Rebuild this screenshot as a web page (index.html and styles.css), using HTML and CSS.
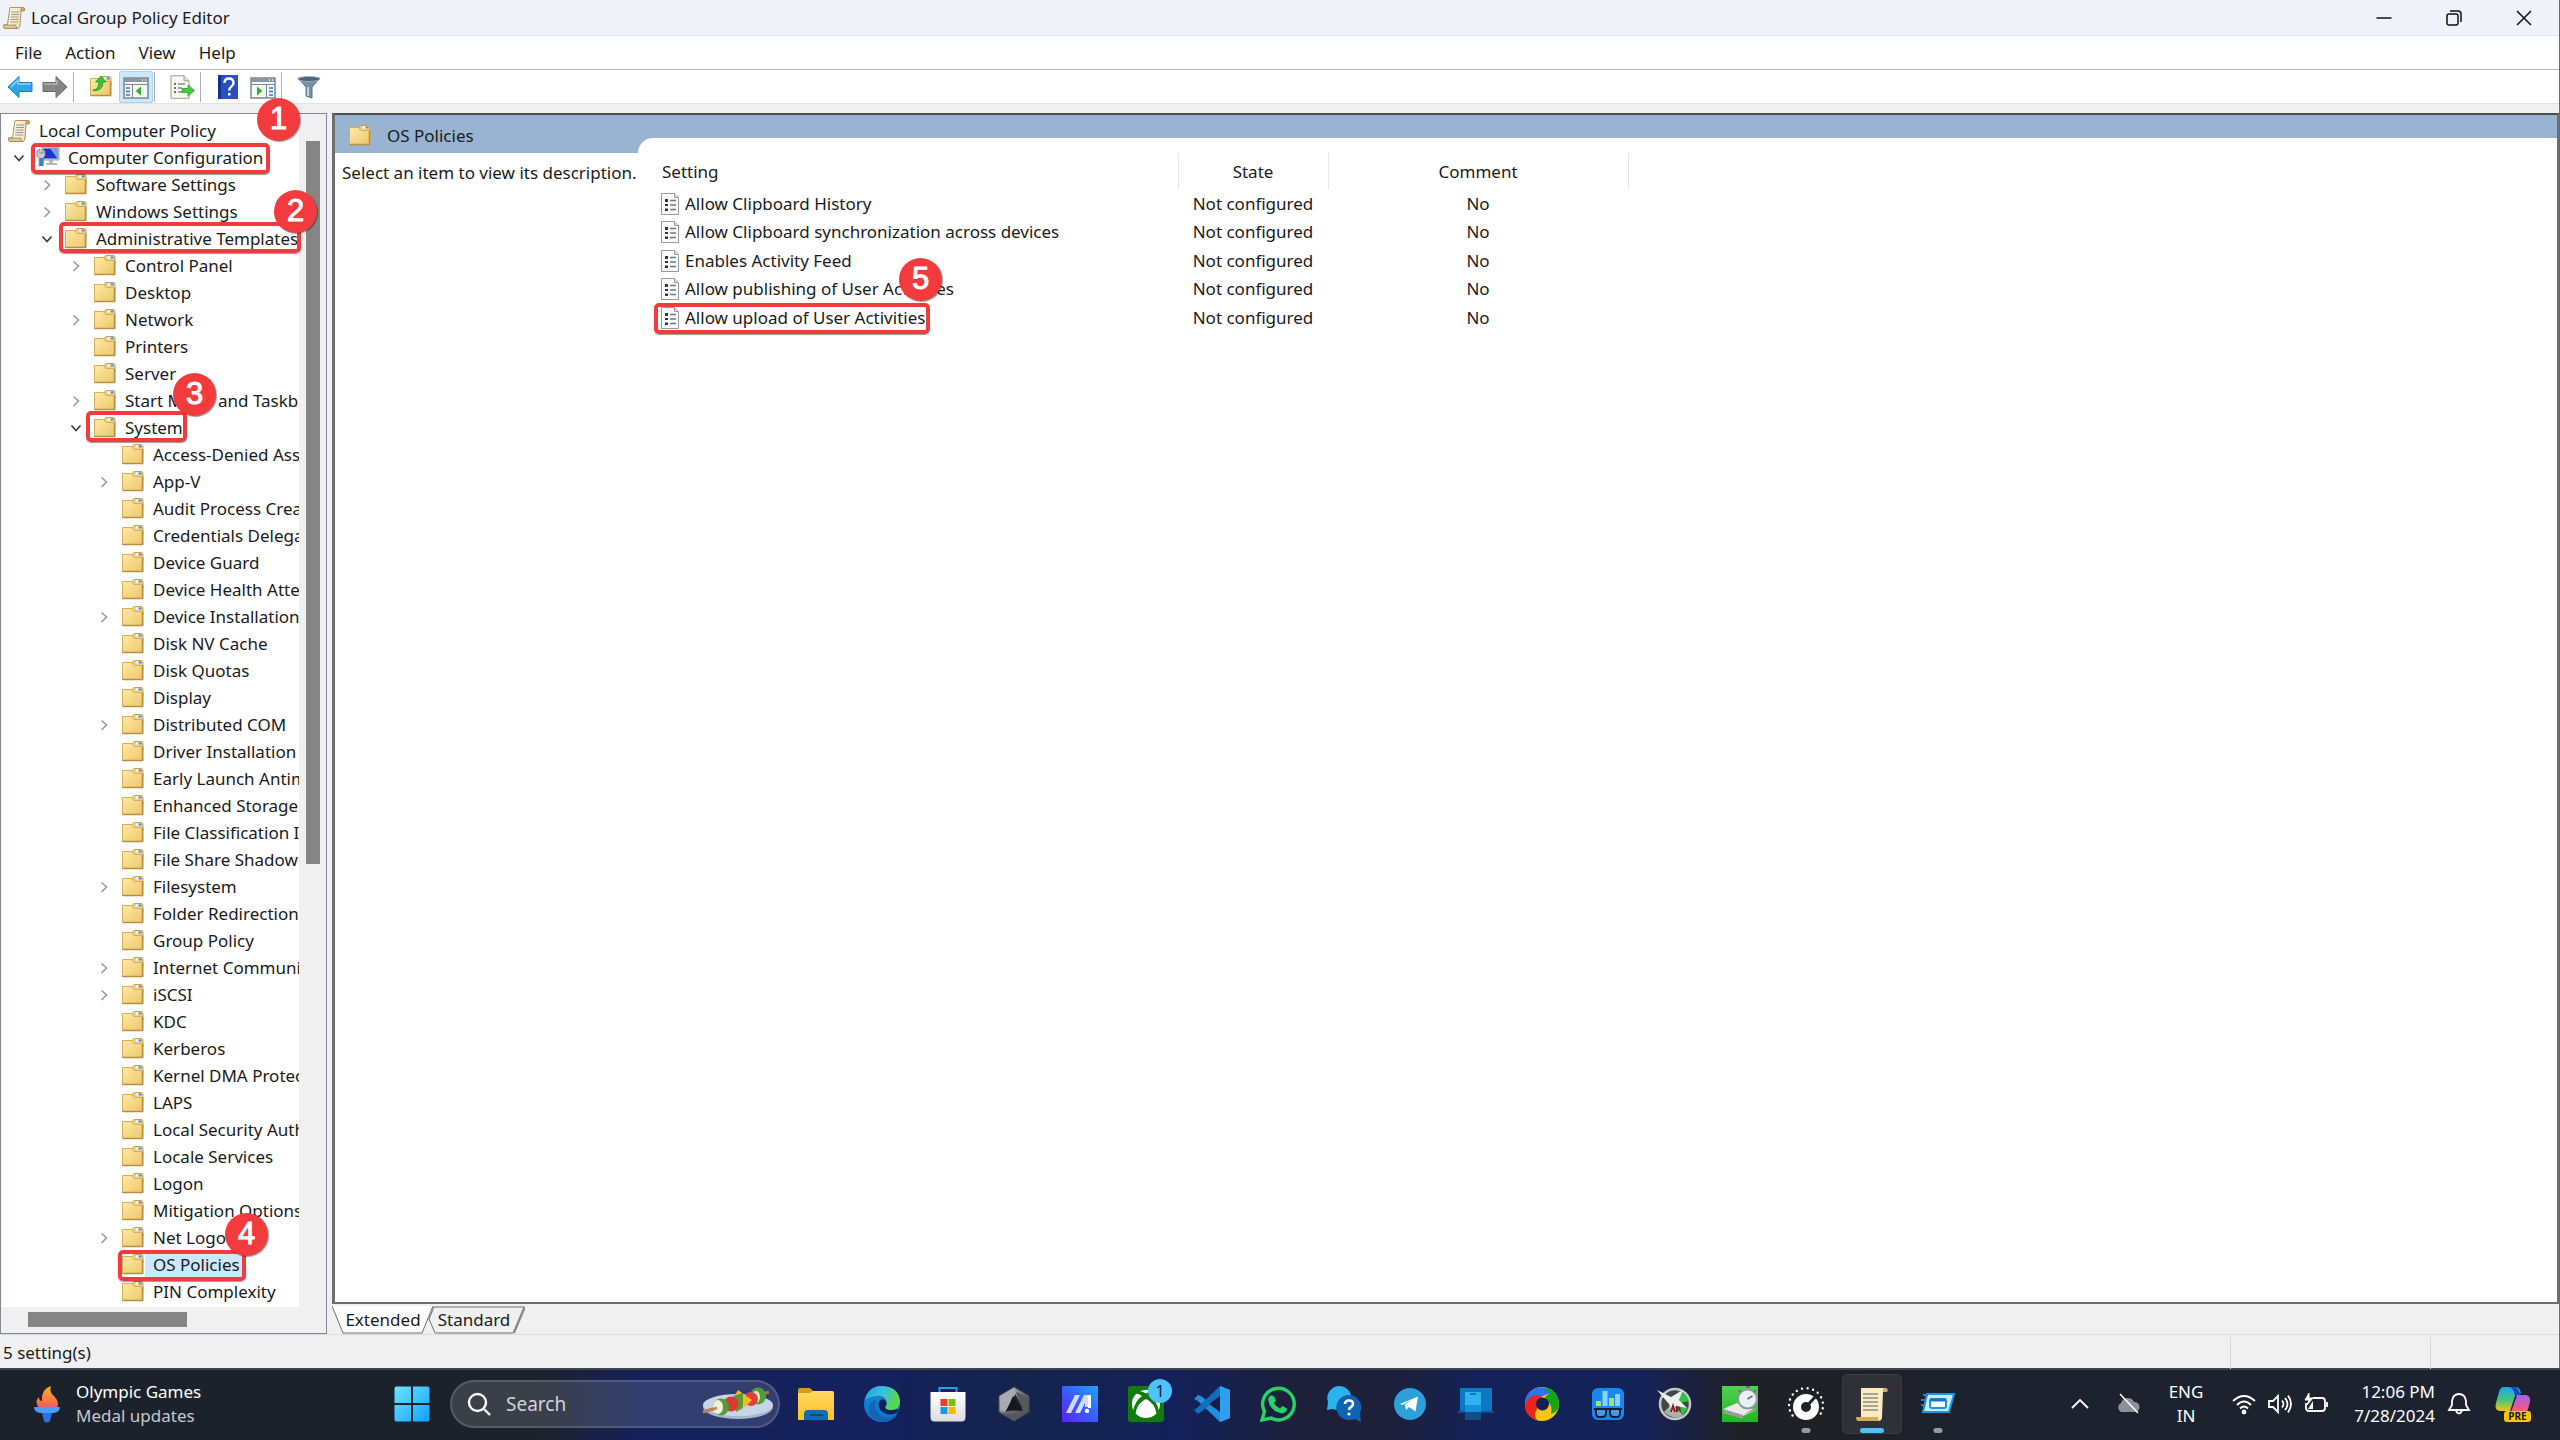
FILE: index.html
```html
<!DOCTYPE html>
<html lang="en">
<head>
<meta charset="utf-8">
<title>Local Group Policy Editor</title>
<link rel="stylesheet" href="styles.css">
</head>
<body>
<svg class="defs" aria-hidden="true">
  <defs>
    <linearGradient id="g-folder" x1="0" y1="0" x2="1" y2="1"><stop offset="0" stop-color="#fdeaa8"/><stop offset="1" stop-color="#ecc668"/></linearGradient>
    <linearGradient id="g-scroll" x1="0" y1="0" x2="1" y2="0"><stop offset="0" stop-color="#fffdf0"/><stop offset="1" stop-color="#ecdcae"/></linearGradient>
    <linearGradient id="g-win" x1="0" y1="0" x2="1" y2="1"><stop offset="0" stop-color="#6be4ff"/><stop offset="1" stop-color="#12a2fb"/></linearGradient>
    <linearGradient id="g-flame" x1="0" y1="0" x2="0" y2="1"><stop offset="0" stop-color="#ffb01f"/><stop offset="1" stop-color="#f05a5a"/></linearGradient>
    <linearGradient id="g-edge" x1="0" y1="0" x2="1" y2="0.4"><stop offset="0" stop-color="#1c9fe0"/><stop offset="0.5" stop-color="#35c1e0"/><stop offset="1" stop-color="#5ad64a"/></linearGradient>
    <linearGradient id="g-edge2" x1="0" y1="0" x2="0.4" y2="1"><stop offset="0" stop-color="#1484d8"/><stop offset="1" stop-color="#0c78d0"/></linearGradient>
    <linearGradient id="g-ma" x1="0" y1="1" x2="1" y2="0"><stop offset="0" stop-color="#5a22ff"/><stop offset="0.5" stop-color="#3a5cff"/><stop offset="1" stop-color="#18a8ff"/></linearGradient>
    <linearGradient id="g-hex" x1="0" y1="0" x2="1" y2="1"><stop offset="0" stop-color="#d5d9df"/><stop offset="0.5" stop-color="#6d7278"/><stop offset="1" stop-color="#3a3d42"/></linearGradient>
    <linearGradient id="g-store" x1="0" y1="0" x2="0" y2="1"><stop offset="0" stop-color="#ffffff"/><stop offset="1" stop-color="#dcdcdc"/></linearGradient>
    <linearGradient id="g-exp" x1="0" y1="0" x2="0" y2="1"><stop offset="0" stop-color="#ffd964"/><stop offset="1" stop-color="#ffc021"/></linearGradient>
    <linearGradient id="g-cop1" x1="0" y1="0" x2="0" y2="1"><stop offset="0" stop-color="#1aa7f0"/><stop offset="0.55" stop-color="#4cc47a"/><stop offset="1" stop-color="#f5c21a"/></linearGradient>
    <linearGradient id="g-cop2" x1="0" y1="0" x2="0" y2="1"><stop offset="0" stop-color="#a85cf5"/><stop offset="1" stop-color="#ff5a6a"/></linearGradient>
    <linearGradient id="g-green" x1="0" y1="0" x2="0" y2="1"><stop offset="0" stop-color="#4fd24f"/><stop offset="1" stop-color="#1fb81f"/></linearGradient>

    <symbol id="folder" viewBox="0 0 24 24">
      <path d="M11.5 3.500q.5-2 2-2h6.500q2 0 2 2V10h-10z" fill="#efd28a" stroke="#c9a04c"/>
      <path d="M15 3.500h5" stroke="#fff" stroke-width="2"/><path d="M17.500 3.500h3" stroke="#3d8fe0" stroke-width="2"/>
      <path d="M1.500 3.500h9l2.500 3h9v14h-20.500z" fill="url(#g-folder)" stroke="#d6ad59"/>
      <path d="M21.500 7v13.500h-20" fill="none" stroke="#b88f42" stroke-width="1.500"/>
    </symbol>
    <symbol id="scroll" viewBox="0 0 24 24">
      <path d="M8 1.500h12.500q2.500.5 2 3l-3.500.5-1 14q0 3-2.500 3.500H3q-2-.5-1.500-3.500l4-.500z" fill="url(#g-scroll)" stroke="#a8946a"/>
      <path d="M19 5V3q.5-1.500 2-1.500 2 .5 1.500 3z" fill="#d3b878" stroke="#9a8252" stroke-width=".8"/>
      <path d="M1.500 19H14v1.500q.5 2 2 2H3q-2-.5-1.500-3.500z" fill="#dfc68c" stroke="#a08654" stroke-width=".8"/>
      <path d="M9 6h8M9 8.500h8M8.500 11h8M8.500 13.500h8M8 16h8" stroke="#96989c" stroke-width="1"/>
    </symbol>
    <symbol id="computer" viewBox="0 0 24 24">
      <path d="M6 1h17v13H6z" fill="#d5d8dc" stroke="#9a9da2"/>
      <path d="M7.500 2.500h14v10h-14z" fill="#1636cc"/><path d="M14 2.500h7.500v10z" fill="#6fa4f2"/>
      <path d="M13 14h4v3h4v2H10v-2h3z" fill="#b4b8bd"/>
      <path d="M1 5l3-2v4l3 0V3l2 2v5l-2 2v7l-4 1v-8L1 10z" fill="#c6ccd2" stroke="#73797f" stroke-width=".8"/>
      <path d="M3.500 12h4v8h-4z" fill="#3f7fbd"/>
    </symbol>
    <symbol id="doc" viewBox="0 0 20 24">
      <path d="M1.500 1.500h13l4 4v17h-17z" fill="#fafafa" stroke="#9a9a9a"/>
      <path d="M14.500 1.500v4h4" fill="#ddd" stroke="#9a9a9a"/>
      <path d="M5 7h3v3H5zM5 12h3v2H5zM5 16.500h3v2.500H5z" fill="#333"/>
      <path d="M10 8.500h6M10 13h6M10 17.500h6" stroke="#6b7a86" stroke-width="1.500"/>
    </symbol>
    <symbol id="right" viewBox="0 0 22 22"><path d="M8.500 6.500l5 4.500-5 5" fill="none" stroke="#9b9b9b" stroke-width="1.600"/></symbol>
    <symbol id="down" viewBox="0 0 22 22"><path d="M6.500 8.500l4.500 5 4.500-5" fill="none" stroke="#3c3c3c" stroke-width="1.700"/></symbol>
  </defs>
</svg>

<div class="window">
  <header class="titlebar">
    <svg class="i24"><use href="#scroll"/></svg>
    <h1>Local Group Policy Editor</h1>
    <div class="caption">
      <button aria-label="Minimize"><svg viewBox="0 0 16 16"><path d="M.5 8h15"/></svg></button>
      <button aria-label="Restore"><svg viewBox="0 0 16 16"><rect x="1" y="4" width="11" height="11" rx="2"/><path d="M4 1h8q3 0 3 3v8"/></svg></button>
      <button aria-label="Close"><svg viewBox="0 0 16 16"><path d="M1 1l14 14M15 1L1 15"/></svg></button>
    </div>
  </header>

  <nav class="menubar">
    <button>File</button><button>Action</button><button>View</button><button>Help</button>
  </nav>

  <div class="toolbar">
    <button aria-label="Back"><svg viewBox="0 0 26 24"><path d="M1 12L12 1.500V7.500H25v9H12v6z" fill="#2fa4e6" stroke="#1a7fc4"/><path d="M4 12l7-7v4h13" fill="none" stroke="#8fd4f8" stroke-width="1.500"/></svg></button>
    <button aria-label="Forward"><svg viewBox="0 0 26 24"><path d="M25 12L14 1.500V7.500H1v9h13v6z" fill="#858585" stroke="#6b6b6b"/><path d="M2 9h13V5" fill="none" stroke="#b5b5b5" stroke-width="1.500"/></svg></button>
    <span class="sep"></span>
    <button aria-label="Up one level"><svg viewBox="0 0 24 24"><use href="#folder" width="24" height="24"/><path d="M4 15q6-1 6-8H6.500L12 1l5 6h-3q0 9-10 9z" fill="#3ac43a" stroke="#1f9a1f" stroke-width=".8"/></svg></button>
    <button class="on" aria-label="Show console tree"><svg viewBox="0 0 26 24"><path d="M1 3h24v20H1z" fill="#f4f6f8" stroke="#7d8790" stroke-width="1.500"/><path d="M1 3h24v4H1z" fill="#8a96a2"/><path d="M19 5h1M22 5h1" stroke="#fff" stroke-width="1.500"/><path d="M1 9.500h24M9.500 10v13" stroke="#7d8790"/><path d="M3 13h4M3 16.500h4M3 20h4" stroke="#3e78c0" stroke-width="1.500"/><path d="M18 11.500v9L12.500 16z" fill="#2fb52f"/></svg></button>
    <span class="sep"></span>
    <button aria-label="Export list"><svg viewBox="0 0 26 24"><path d="M2 .8h13l5 5v17.500H2z" fill="#fbfaf2" stroke="#a09a88"/><path d="M15 .8v5h5" fill="#ddd" stroke="#a09a88"/><path d="M5 9h2M5 13h2M5 17h2" stroke="#444" stroke-width="1.500"/><path d="M9 9h7M9 13h4M9 17h4" stroke="#7a8a98" stroke-width="1.500"/><path d="M13 13.500h6V10l6.500 5.500L19 21v-3.500h-6z" fill="#46cc3c" stroke="#2aa024" stroke-width=".8"/></svg></button>
    <span class="sep"></span>
    <button aria-label="Help"><svg viewBox="0 0 26 24"><path d="M3 0h20v24H3z" fill="#2b4fc0"/><path d="M3 0h3v24H3z" fill="#16308c"/><path d="M9.500 8q0-4.500 4.500-4.500T18.500 8q0 2-2.200 3.600T14.200 15.500" fill="none" stroke="#fff" stroke-width="2.400"/><path d="M13 18h2.500v2.500H13z" fill="#fff"/></svg></button>
    <button aria-label="Show action pane"><svg viewBox="0 0 26 24"><path d="M1 3h24v20H1z" fill="#f4f6f8" stroke="#7d8790" stroke-width="1.500"/><path d="M1 3h24v4H1z" fill="#8a96a2"/><path d="M19 5h1M22 5h1" stroke="#fff" stroke-width="1.500"/><path d="M1 9.500h24M16.500 10v13" stroke="#7d8790"/><path d="M19 13h4M19 16.500h4M19 20h4" stroke="#3e78c0" stroke-width="1.500"/><path d="M7 11.500v9l5.500-4.500z" fill="#2fb52f"/></svg></button>
    <span class="sep"></span>
    <button aria-label="Filter"><svg viewBox="0 0 26 24"><path d="M2 3h22L16 12v11l-6-2V12z" fill="#7890a6" stroke="#5d7388"/><ellipse cx="13" cy="4" rx="11" ry="2.500" fill="#4d6478" stroke="#9db2c4"/><path d="M12 12v9" stroke="#c3d3e0" stroke-width="2"/></svg></button>
  </div>

  <main class="panes">
    <section class="tree-pane">
      <ul class="tree">
        <li class="l0"><svg class="i24"><use href="#scroll"/></svg><span>Local Computer Policy</span></li>
        <li class="l1"><button aria-label="Collapse"><svg><use href="#down"/></svg></button><svg class="i24"><use href="#computer"/></svg><span>Computer Configuration</span></li>
        <li class="l2"><button aria-label="Expand"><svg><use href="#right"/></svg></button><svg class="i24"><use href="#folder"/></svg><span>Software Settings</span></li>
        <li class="l2"><button aria-label="Expand"><svg><use href="#right"/></svg></button><svg class="i24"><use href="#folder"/></svg><span>Windows Settings</span></li>
        <li class="l2"><button aria-label="Collapse"><svg><use href="#down"/></svg></button><svg class="i24"><use href="#folder"/></svg><span>Administrative Templates</span></li>
        <li class="l3"><button aria-label="Expand"><svg><use href="#right"/></svg></button><svg class="i24"><use href="#folder"/></svg><span>Control Panel</span></li>
        <li class="l3 leaf"><svg class="i24"><use href="#folder"/></svg><span>Desktop</span></li>
        <li class="l3"><button aria-label="Expand"><svg><use href="#right"/></svg></button><svg class="i24"><use href="#folder"/></svg><span>Network</span></li>
        <li class="l3 leaf"><svg class="i24"><use href="#folder"/></svg><span>Printers</span></li>
        <li class="l3 leaf"><svg class="i24"><use href="#folder"/></svg><span>Server</span></li>
        <li class="l3"><button aria-label="Expand"><svg><use href="#right"/></svg></button><svg class="i24"><use href="#folder"/></svg><span>Start Menu and Taskbar</span></li>
        <li class="l3"><button aria-label="Collapse"><svg><use href="#down"/></svg></button><svg class="i24"><use href="#folder"/></svg><span>System</span></li>
        <li class="l4 leaf"><svg class="i24"><use href="#folder"/></svg><span>Access-Denied Assistance</span></li>
        <li class="l4"><button aria-label="Expand"><svg><use href="#right"/></svg></button><svg class="i24"><use href="#folder"/></svg><span>App-V</span></li>
        <li class="l4 leaf"><svg class="i24"><use href="#folder"/></svg><span>Audit Process Creation</span></li>
        <li class="l4 leaf"><svg class="i24"><use href="#folder"/></svg><span>Credentials Delegation</span></li>
        <li class="l4 leaf"><svg class="i24"><use href="#folder"/></svg><span>Device Guard</span></li>
        <li class="l4 leaf"><svg class="i24"><use href="#folder"/></svg><span>Device Health Attestation</span></li>
        <li class="l4"><button aria-label="Expand"><svg><use href="#right"/></svg></button><svg class="i24"><use href="#folder"/></svg><span>Device Installation</span></li>
        <li class="l4 leaf"><svg class="i24"><use href="#folder"/></svg><span>Disk NV Cache</span></li>
        <li class="l4 leaf"><svg class="i24"><use href="#folder"/></svg><span>Disk Quotas</span></li>
        <li class="l4 leaf"><svg class="i24"><use href="#folder"/></svg><span>Display</span></li>
        <li class="l4"><button aria-label="Expand"><svg><use href="#right"/></svg></button><svg class="i24"><use href="#folder"/></svg><span>Distributed COM</span></li>
        <li class="l4 leaf"><svg class="i24"><use href="#folder"/></svg><span>Driver Installation</span></li>
        <li class="l4 leaf"><svg class="i24"><use href="#folder"/></svg><span>Early Launch Antimalware</span></li>
        <li class="l4 leaf"><svg class="i24"><use href="#folder"/></svg><span>Enhanced Storage Access</span></li>
        <li class="l4 leaf"><svg class="i24"><use href="#folder"/></svg><span>File Classification Infrastructure</span></li>
        <li class="l4 leaf"><svg class="i24"><use href="#folder"/></svg><span>File Share Shadow Copy</span></li>
        <li class="l4"><button aria-label="Expand"><svg><use href="#right"/></svg></button><svg class="i24"><use href="#folder"/></svg><span>Filesystem</span></li>
        <li class="l4 leaf"><svg class="i24"><use href="#folder"/></svg><span>Folder Redirection</span></li>
        <li class="l4 leaf"><svg class="i24"><use href="#folder"/></svg><span>Group Policy</span></li>
        <li class="l4"><button aria-label="Expand"><svg><use href="#right"/></svg></button><svg class="i24"><use href="#folder"/></svg><span>Internet Communication</span></li>
        <li class="l4"><button aria-label="Expand"><svg><use href="#right"/></svg></button><svg class="i24"><use href="#folder"/></svg><span>iSCSI</span></li>
        <li class="l4 leaf"><svg class="i24"><use href="#folder"/></svg><span>KDC</span></li>
        <li class="l4 leaf"><svg class="i24"><use href="#folder"/></svg><span>Kerberos</span></li>
        <li class="l4 leaf"><svg class="i24"><use href="#folder"/></svg><span>Kernel DMA Protection</span></li>
        <li class="l4 leaf"><svg class="i24"><use href="#folder"/></svg><span>LAPS</span></li>
        <li class="l4 leaf"><svg class="i24"><use href="#folder"/></svg><span>Local Security Authority</span></li>
        <li class="l4 leaf"><svg class="i24"><use href="#folder"/></svg><span>Locale Services</span></li>
        <li class="l4 leaf"><svg class="i24"><use href="#folder"/></svg><span>Logon</span></li>
        <li class="l4 leaf"><svg class="i24"><use href="#folder"/></svg><span>Mitigation Options</span></li>
        <li class="l4"><button aria-label="Expand"><svg><use href="#right"/></svg></button><svg class="i24"><use href="#folder"/></svg><span>Net Logon</span></li>
        <li class="l4 leaf selected"><svg class="i24"><use href="#folder"/></svg><span>OS Policies</span></li>
        <li class="l4 leaf"><svg class="i24"><use href="#folder"/></svg><span>PIN Complexity</span></li>
      </ul>
      <div class="vbar"><div class="thumb"></div></div>
      <div class="hbar"><div class="thumb"></div></div>
    </section>

    <section class="result-pane">
      <div class="result-body">
        <div class="describe">
          <h2><svg class="i24"><use href="#folder"/></svg>OS Policies</h2>
          <p>Select an item to view its description.</p>
        </div>
        <div class="results">
          <div class="sheet">
            <table>
              <colgroup><col class="c-setting"><col class="c-state"><col class="c-comment"></colgroup>
              <thead><tr><th>Setting</th><th>State</th><th>Comment</th></tr></thead>
              <tbody>
                <tr><td><div class="name"><svg><use href="#doc"/></svg>Allow Clipboard History</div></td><td>Not configured</td><td>No</td></tr>
                <tr><td><div class="name"><svg><use href="#doc"/></svg>Allow Clipboard synchronization across devices</div></td><td>Not configured</td><td>No</td></tr>
                <tr><td><div class="name"><svg><use href="#doc"/></svg>Enables Activity Feed</div></td><td>Not configured</td><td>No</td></tr>
                <tr><td><div class="name"><svg><use href="#doc"/></svg>Allow publishing of User Activities</div></td><td>Not configured</td><td>No</td></tr>
                <tr><td><div class="name"><svg><use href="#doc"/></svg>Allow upload of User Activities</div></td><td>Not configured</td><td>No</td></tr>
              </tbody>
            </table>
          </div>
        </div>
      </div>
      <div class="tabs">
        <button class="tab active"><svg viewBox="0 0 102 28"><path d="M0 0L11 27H90L101 0" fill="#fff" stroke="#6e6e6e"/></svg>Extended</button>
        <button class="tab"><svg viewBox="0 0 102 28"><path d="M11 1L6 13L12 27H90L101 1z" fill="#f0f0f0" stroke="#6e6e6e"/><path d="M91 27L102 1" stroke="#8b8b8b" stroke-width="2"/></svg>Standard</button>
      </div>
    </section>
  </main>

  <footer class="status"><span>5 setting(s)</span><i></i><i></i></footer>

  <div class="marks">
    <div class="box b1"></div><div class="box b2"></div><div class="box b3"></div><div class="box b4"></div><div class="box b5"></div>
    <div class="num n1">1</div><div class="num n2">2</div><div class="num n3">3</div><div class="num n4">4</div><div class="num n5">5</div>
  </div>
</div>

<div class="taskbar">
  <button class="widget">
    <svg viewBox="0 0 28 38"><path d="M6 23Q1 17 6 12q0 4 3 4Q8 4 18 1q-2 6 3 10 6 6 3 12z" fill="url(#g-flame)"/><path d="M1 22h26q0 5-6 6H7q-6-1-6-6z" fill="#4a9cf5"/><path d="M9 28h10l-2 8q-3 3-6 0z" fill="#2f6fe0"/></svg>
    <span class="lines"><span>Olympic Games</span><span class="dim">Medal updates</span></span>
  </button>
  <div class="apps">
    <button class="app" aria-label="Start"><svg viewBox="0 0 36 36"><path d="M.5 2.500q0-2 2-2h14.500V17H.500zM19 .5h14.500q2 0 2 2V17H19zM.5 19H17v16.500H2.500q-2 0-2-2zM19 19h16.500v14.500q0 2-2 2H19z" fill="url(#g-win)"/></svg></button>
    <label class="search">
      <svg viewBox="0 0 24 24"><circle cx="10.500" cy="10.500" r="8.500"/><path d="M17 17l6 6"/></svg>
      <input type="text" placeholder="Search">
      <svg class="plate" viewBox="0 0 74 34"><ellipse cx="37" cy="20" rx="35" ry="12" fill="#a9b7cf"/><ellipse cx="37" cy="18" rx="35" ry="11" fill="#c9d5e6"/><path d="M2 25L68 5" stroke="#a5744a" stroke-width="3"/><ellipse cx="57" cy="9" rx="8" ry="8.500" fill="#4f9e3c"/><ellipse cx="55" cy="10" rx="4" ry="6" fill="#e9f0c4"/><circle cx="50" cy="12" r="7" fill="#e0403a"/><path d="M37 3l14 10-7 7-10-12z" fill="#f5b82e"/><path d="M32 9l10-3v15l-7 4z" fill="#5c9a35"/><circle cx="30" cy="17" r="7.500" fill="#d93a34"/><ellipse cx="20" cy="20" rx="8" ry="8.500" fill="#4f9e3c"/><ellipse cx="17" cy="20" rx="5" ry="7" fill="#f3f0d4"/><path d="M2 25l14-4" stroke="#b98252" stroke-width="2.500"/></svg>
    </label>
    <button class="app" aria-label="File Explorer"><svg viewBox="0 0 36 36"><path d="M0 4q0-2 2-2h10l4 4v6H0z" fill="#d99c0c"/><path d="M0 7h12l3-2h19q2 0 2 2v27H0z" fill="url(#g-exp)"/><path d="M6 34V28q0-4 4-4h16q4 0 4 4v6z" fill="#0f6cbd"/><path d="M12 29h13" stroke="#0a4a86" stroke-width="2"/></svg></button>
    <button class="app" aria-label="Edge"><svg viewBox="0 0 36 36"><circle cx="18" cy="18" r="18" fill="url(#g-edge2)"/><path d="M1 14Q4 0 18 0q17 1 18 15 0 9-9 9-6 0-6-3 3-3 1-7-3-5-10-4-7 1-11 4z" fill="url(#g-edge)"/><path d="M12 14q-3 9 3 14 8 7 18 1-6 8-16 7Q4 33 5 22q1-6 7-8z" fill="#1464b0"/><path d="M15 16q2-4 6-2 3 4 0 7 1 4 8 3l6-1-2 4q-7 3-13 0-7-4-5-12z" fill="#141f58"/></svg></button>
    <button class="app" aria-label="Microsoft Store"><svg viewBox="0 0 36 36"><path d="M9.500 8V2h17v6" fill="none" stroke="#2aa0e8" stroke-width="2"/><path d="M.5 6h35v25q0 4.500-4 4.500H4.500q-4 0-4-4.500z" fill="url(#g-store)"/><path d="M10.500 13h7v7h-7z" fill="#f03a22"/><path d="M18.500 13h7v7h-7z" fill="#80b912"/><path d="M10.500 21h7v7h-7z" fill="#109ce8"/><path d="M18.500 21h7v7h-7z" fill="#fcb50c"/></svg></button>
    <button class="app" aria-label="Armoury Crate"><svg viewBox="0 0 36 36"><path d="M18 1l15 9v16l-15 9-15-9V10z" fill="url(#g-hex)" stroke="#4c4f55"/><path d="M18 6l9 16-18 4z" fill="#26282d"/><path d="M4 11l14-9 2 5L9 26 4 24z" fill="#a6abb3"/><path d="M20 6l8 20-10 2-12-1 12 7 14-9V11z" fill="#55585e"/><path d="M17 10l10 15-16-1z" fill="#17181c"/></svg></button>
    <button class="app" aria-label="MyASUS"><svg viewBox="0 0 36 36"><path d="M0 0h36v36H0z" fill="url(#g-ma)"/><path d="M4 27L13 9h5L9 27zM13 27l9-18h4v12h-3v-4l-5 10z" fill="#cfdcff"/><path d="M26 9h3v13h-3z" fill="#fff"/><circle cx="25" cy="25" r="2.200" fill="#fff"/></svg></button>
    <button class="app" aria-label="Xbox"><svg viewBox="0 0 36 36"><rect width="36" height="36" rx="3" fill="#107c10"/><circle cx="18" cy="18" r="14" fill="#fff"/><path d="M18 13Q9 17 7.500 28L5 25Q7 15 14 10 10 7 7.500 8L10 5q4-.500 8 2.500Q22 4.500 26 5l2.500 3Q26 7 22 10q7 5 9 15l-2.500 3Q27 17 18 13z" fill="#107c10"/></svg><span class="count">1</span></button>
    <button class="app" aria-label="Visual Studio Code"><svg viewBox="0 0 36 36"><path d="M26 0l10 4v28l-10 4L4 15 0 13l4-4 3 1 19 15z" fill="#1d8fe0"/><path d="M26 0L3 22 0 24l4 4 3-2L26 11z" fill="#0f6fb8"/><path d="M26 0l10 4v28l-10 4z" fill="#2da0f0"/><path d="M26 10v16l-11-8z" fill="#161f44"/></svg></button>
    <button class="app" aria-label="WhatsApp"><svg viewBox="0 0 36 36"><path d="M2 34l2.500-8.500A15.800 15.800 0 1 1 11 32z" fill="none" stroke="#25d366" stroke-width="3.400"/><path d="M10 10q3-2 5 2l1 2.500-2 2.500q2 4 6 5.500l2.500-2.500 4.500 2.500q0 4-5 5-12-2-14-14 0-2 2-3.500z" fill="#25d366"/></svg></button>
    <button class="app" aria-label="Get Help"><svg viewBox="0 0 36 36"><path d="M1 24l1-8A12 12 0 1 1 13 24q-4 0-6-1z" fill="#2cb2ee"/><path d="M35 36l-1-9A12.500 12.500 0 1 0 23 34q4 0 6-1z" fill="#0f63b4"/><path d="M19 18q0-3.500 4-3.500t4 3.500q0 2-2 3t-2 3" fill="none" stroke="#fff" stroke-width="2.600"/><circle cx="23" cy="28" r="1.600" fill="#fff"/></svg></button>
    <button class="app" aria-label="Telegram"><svg viewBox="0 0 36 36"><circle cx="18" cy="18" r="16" fill="#2ba0da"/><path d="M8 18L26 10.500l-2.500 15-6.500-4.500-3 3-1-5.500 9-6-11.500 6.500z" fill="#fff"/></svg></button>
    <button class="app" aria-label="Phone Link"><svg viewBox="0 0 36 36"><path d="M2 2h32v23H2z" fill="#0f76c4"/><path d="M0 25h36v2H0z" fill="#124f88"/><path d="M7 6h16v20H7z" fill="#2cb4f0"/><path d="M12 8h6" stroke="#0f76c4" stroke-width="2"/><path d="M7 19h16v7H7z" fill="#1590dc"/><path d="M7 27h16v7H7z" fill="#124f88"/></svg></button>
    <button class="app" aria-label="ShareX"><svg viewBox="0 0 36 36"><circle cx="18" cy="18" r="17" fill="#ffc40c"/><path d="M1 18Q1 5 14 1.500 28 0 33 10q-8-4-14 0-6 2-7 8z" fill="#2b74ee"/><path d="M20 1q15 3 15 18-1 7-8 9 2-10-5-14-3-4 4-6-2-4-6-7z" fill="#14a614"/><path d="M1 19q-1 10 12 15-4-5 0-11 0-6 5-12-12-5-17 8z" fill="#f02318"/><circle cx="18.500" cy="18" r="6.500" fill="#141f56"/></svg></button>
    <button class="app" aria-label="Task analytics"><svg viewBox="0 0 36 36"><rect x="2" y="2" width="32" height="32" rx="6" fill="#1888f0"/><path d="M6 15h5v5H6zM19 12h5v8h-5z" fill="#a4e65a"/><path d="M12.500 5h5v15h-5zM25 8h5v12h-5z" fill="#8bd0fb"/><path d="M4 23h28" stroke="#12202e" stroke-width="2"/><path d="M6 23h10v4q0 4-4 4H9q-3 0-3-4zM20 23h10v4q0 4-3 4h-3q-4 0-4-4z" fill="#3f9cf0" stroke="#12202e" stroke-width="2"/></svg></button>
    <button class="app" aria-label="Autoruns"><svg viewBox="0 0 36 36"><circle cx="19" cy="18" r="15" fill="#3d4a40" stroke="#c3c8c6" stroke-width="2.500"/><path d="M8 26l8-8 12 12q-10 5-20-4z" fill="#aab0ac"/><path d="M22 5q8 2 11 10l-9 2zM24 20l8 2-6 8z" fill="#2fc43f"/><path d="M1 4l14 7 12-7-4 10 8 8-11-2-4 7-3-9z" fill="#eef0f0"/><path d="M15 26l2-6 2 6M21 20v6" stroke="#8e1d1d" stroke-width="2" fill="none"/></svg></button>
    <button class="app" aria-label="Disk benchmark"><svg viewBox="0 0 36 36"><path d="M0 0h36v36H0z" fill="url(#g-green)"/><path d="M1 23l14-6 19 7-13 6z" fill="#ebebeb"/><path d="M1 23v4l20 6v-4zM21 29l13-5v-3" fill="#9a9c9a"/><circle cx="25.500" cy="13" r="9.500" fill="#e9eff4" stroke="#8f979b" stroke-width="2"/><path d="M25.500 13l5-3M24 1h4M16 4l3 2M34 4l-2 2" stroke="#6a7478" stroke-width="2"/></svg></button>
    <button class="app run" aria-label="Dial"><svg viewBox="0 0 36 36"><circle cx="18" cy="21" r="13" fill="#fff"/><circle cx="18" cy="21" r="5" fill="#202228"/><path d="M18 21L28 10" stroke="#202228" stroke-width="3"/><path d="M4.500 29.500A17 17 0 1 1 31.500 29.500" fill="none" stroke="#fff" stroke-width="2.400" stroke-linecap="round" stroke-dasharray="0 5.600"/></svg></button>
    <button class="app run focus" aria-label="Local Group Policy Editor"><svg viewBox="0 0 36 36"><path d="M7 2h22q5 0 4 4h-4l-1 25q0 4-4 4H4q-2-2-1-4h4z" fill="#f9ecc2"/><path d="M29 6V3q1-1 3-1 3 1 1 4zM2 31h22v2q0 1 2 2H4q-2-1-2-4z" fill="#d9a95a"/><path d="M9 8h15M9 12h15M9 16h15M9 20h15M9 24h15" stroke="#8c8a86" stroke-width="1.500"/></svg></button>
    <button class="app run" aria-label="Run"><svg viewBox="0 0 36 36"><path d="M7 8h27l-5 18H3z" fill="#c6ecff" stroke="#1b93e6" stroke-width="2"/><path d="M3 9h5M1 14h5M1 19h4" stroke="#2a7fc4" stroke-width="2"/><rect x="10" y="13" width="16" height="9" rx="2" fill="#fff" stroke="#1b93e6" stroke-width="2"/><path d="M10 14h16" stroke="#1b70c0" stroke-width="3"/></svg></button>
  </div>
  <div class="tray">
    <button aria-label="Show hidden icons"><svg viewBox="0 0 24 24"><path d="M4 16l8-8 8 8"/></svg></button>
    <button aria-label="OneDrive"><svg viewBox="0 0 24 24"><path d="M5 20a5 5 0 0 1 0-9 7 7 0 0 1 13-1 5 5 0 0 1 1 10z" fill="#8d9094" stroke="none"/><path d="M4 2l18 19" stroke-width="1.500"/></svg></button>
    <button class="lines lang"><span>ENG</span><span>IN</span></button>
    <button class="net" aria-label="Network, volume and battery">
      <svg viewBox="0 0 24 24"><path d="M1 9q11-10 22 0M5 13q7-7 14 0M8 16.500q4-4 8 0"/><circle cx="12" cy="20" r="1.500" fill="#fff"/></svg>
      <svg viewBox="0 0 24 24"><path d="M1 9h4l5-5v16l-5-5H1zM14 8.500q3 3.500 0 7M17 6q5 6 0 12M20 3.500q6 8 0 17"/></svg>
      <svg viewBox="0 0 24 24"><path d="M9 6h9q3 0 3 3v7q0 3-3 3H5q-3 0-3-3v-5M23 10v5"/><path d="M5 1L1 8h4l-2 5 6-7H5z" fill="#fff" stroke-width="1"/><path d="M4 17l5-8v8z" fill="#fff" stroke="none"/></svg>
    </button>
    <button class="lines clock"><span>12:06 PM</span><span>7/28/2024</span></button>
    <button aria-label="Notifications"><svg viewBox="0 0 24 24"><path d="M2 18l3-5V9q1-7 7-7t7 7v4l3 5zM9 19q3 5 6 0"/></svg></button>
    <button class="copilot" aria-label="Copilot"><svg viewBox="0 0 36 36"><path d="M8 1h12q5 0 6 6l-6 3-5 15H5q-6-1-4-8L4 6q1-4 4-5z" fill="url(#g-cop1)"/><path d="M18 1q6 0 7 8l-5 1q-1-8-6-9z" fill="#1747d0"/><path d="M22 9h9q5 1 4 7l-3 10H16z" fill="url(#g-cop2)"/></svg><span>PRE</span></button>
  </div>
</div>
</body>
</html>
```

FILE: styles.css
```css
:root {
  --ui: "Noto Sans", "Open Sans", sans-serif;
  --face: #f0f0f0;
  --mark: #f33b3d;
}

* { box-sizing: border-box; }

body {
  margin: 0;
  min-height: 100vh;
  display: flex;
  flex-direction: column;
  font: 17px/24px var(--ui);
  color: #1a1a1a;
  background: var(--face);
  overflow: hidden;
}

button {
  padding: 0;
  border: 0;
  background: none;
  font: inherit;
  color: inherit;
}

svg { display: block; flex: none; }
.defs { position: absolute; width: 0; height: 0; }
.i24 { width: 24px; height: 24px; }

/* window frame */
.window {
  position: relative;
  flex: 1;
  display: flex;
  flex-direction: column;
  border-right: 1px solid #6b6b6b;
}

.titlebar {
  display: flex;
  align-items: center;
  height: 36px;
  padding-left: 2px;
  gap: 5px;
  background: #eff2f9;
  border-bottom: 1px solid #e3e6ea;
}
.titlebar h1 { margin: 0; font-size: 17px; font-weight: 400; }
.caption { display: flex; margin-left: auto; }
.caption button {
  display: grid;
  place-items: center;
  width: 70px;
  height: 34px;
}
.caption svg {
  width: 16px;
  height: 16px;
  fill: none;
  stroke: #111;
  stroke-width: 1.5;
}

.menubar {
  display: flex;
  gap: 1px;
  height: 34px;
  padding-left: 4px;
  background: #fff;
  border-bottom: 1px solid #b5b8ba;
}
.menubar button { padding: 0 11px; }

.toolbar {
  display: flex;
  align-items: center;
  gap: 1px;
  height: 34px;
  padding-left: 3px;
  background: #fff;
  border-bottom: 1px solid #e2e2e2;
}
.toolbar button {
  display: grid;
  place-items: center;
  width: 34px;
  height: 32px;
}
.toolbar .on { background: #cce8ff; border: 1px solid #a6d4f7; border-radius: 2px; }
.toolbar svg { width: 26px; height: 24px; }
.toolbar .sep {
  width: 1px;
  height: 30px;
  margin-right: 9px;
  background: #b0b0b0;
}

/* panes */
.panes {
  flex: 1;
  display: flex;
  gap: 5px;
  padding-top: 9px;
  min-height: 0;
}

.tree-pane {
  display: grid;
  grid-template: 1fr 26px / 1fr 27px;
  width: 327px;
  background: var(--face);
  border: 1px solid #828790;
}
.tree {
  margin: 0;
  padding: 3px 0 0;
  list-style: none;
  background: #fff;
  overflow: hidden;
}
.tree li {
  display: flex;
  align-items: center;
  height: 27px;
  white-space: nowrap;
}
.tree button { width: 22px; height: 22px; margin-right: 6px; }
.tree button svg { width: 22px; height: 22px; }
.tree span { padding-left: 8px; }
.l0 { padding-left: 6px; }
.l1 { padding-left: 7px; }
.l2 { padding-left: 35px; }
.l3 { padding-left: 64px; }
.l4 { padding-left: 92px; }
.l3.leaf { padding-left: 92px; }
.l4.leaf { padding-left: 120px; }
.selected span {
  padding-right: 6px;
  background: #cce8ff;
}
.vbar { padding: 27px 6px 0 7px; }
.vbar .thumb { height: 62%; background: #858585; }
.hbar { padding: 5px 0 0 27px; }
.hbar .thumb { width: 159px; height: 15px; background: #858585; }

.result-pane {
  flex: 1;
  display: flex;
  flex-direction: column;
}
.result-body {
  flex: 1;
  display: grid;
  grid-template-columns: 303px 1fr;
  border: 2px solid #6e6e6e;
  border-left-width: 3px;
  border-top-color: #4a4e4e;
  background: #fff;
}
.describe h2 {
  display: flex;
  align-items: center;
  gap: 15px;
  height: 38px;
  margin: 0;
  padding: 3px 0 0 13px;
  background: #99b4d1;
  font-size: 17px;
  font-weight: 400;
}
.describe p { margin: 0; padding: 8px 0 0 7px; white-space: nowrap; }
.results {
  padding-top: 23px;
  background: linear-gradient(#99b4d1 38px, #fff 38px);
}
.sheet {
  height: 100%;
  padding-top: 15px;
  background: #fff;
  border-top-left-radius: 15px;
}
table { table-layout: fixed; width: 990px; border-collapse: collapse; }
.c-setting { width: 540px; }
.c-state { width: 150px; }
.c-comment { width: 300px; }
th, td { padding: 0; text-align: center; font-weight: 400; }
th { height: 36px; padding-top: 2px; border-right: 1px solid #e5e5e5; }
td { height: 28px; }
tr:nth-child(odd) td { height: 29px; }
th:first-child { padding-left: 24px; text-align: left; }
td:first-child { padding-left: 22px; }
.name { display: flex; align-items: center; gap: 5px; }
.name svg { width: 20px; height: 24px; }

.tabs { display: flex; height: 30px; padding-top: 2px; }
.tab {
  position: relative;
  width: 102px;
  height: 28px;
  margin-right: -11px;
  line-height: 28px;
  isolation: isolate;
}
.tab svg {
  position: absolute;
  inset: 0;
  width: 102px;
  height: 28px;
  z-index: -1;
}
.tab.active { z-index: 1; }

.status {
  display: flex;
  align-items: center;
  height: 34px;
  padding: 2px 128px 0 3px;
  border-top: 1px solid #dadada;
}
.status span { margin-right: auto; }
.status i { width: 200px; height: 32px; border-left: 1px solid #d9d9d9; }
.status i + i { width: 1px; }

/* numbered call-outs */
.box, .num { position: absolute; }
.box {
  height: 31px;
  border: 4px solid var(--mark);
  border-radius: 5px;
  box-shadow: 0 1px 1px #0006;
}
.num {
  width: 43px;
  height: 43px;
  border-radius: 50%;
  background: var(--mark);
  box-shadow: 1px 1px 1px #0006;
  color: #fff;
  font: 500 31px/42px "Liberation Sans", sans-serif;
  text-align: center;
  -webkit-text-stroke: 1px #fff;
}
.b1 { left: 31px; top: 143px; width: 239px; }
.b2 { left: 59px; top: 222px; width: 242px; }
.b3 { left: 86px; top: 411px; width: 101px; }
.b4 { left: 118px; top: 1250px; width: 128px; }
.b5 { left: 654px; top: 303px; width: 276px; }
.n1 { left: 257px; top: 98px; }
.n2 { left: 274px; top: 190px; }
.n3 { left: 173px; top: 373px; }
.n4 { left: 225px; top: 1213px; }
.n5 { left: 899px; top: 258px; }

/* taskbar */
.taskbar {
  display: flex;
  align-items: center;
  height: 72px;
  padding-bottom: 2px;
  border-top: 2px solid #3f454d;
  background: linear-gradient(90deg, #1c222c 21%, #14215a 25%, #14215a 35%, #14244c 40%, #14215a 46%, #1d2038 51%, #1d2038 54%, #14225a 58%, #14225a 64%, #202126 68%, #202126 72%, #1c222e 77%);
  color: #fff;
}
.widget {
  display: flex;
  align-items: center;
  gap: 15px;
  width: 379px;
  padding-left: 33px;
  text-align: left;
}
.widget svg { width: 28px; height: 38px; }
.lines { display: flex; flex-direction: column; }
.dim { color: #c6c8cb; }
.apps { display: flex; align-items: center; }
.app {
  position: relative;
  display: grid;
  place-items: center;
  width: 60px;
  height: 60px;
  margin: 0 3px;
  border-radius: 6px;
}
.app svg { width: 36px; height: 36px; }
.count {
  position: absolute;
  top: 5px;
  right: 4px;
  width: 24px;
  height: 24px;
  border-radius: 50%;
  background: #4cc2ff;
  color: #12202e;
  font-size: 16px;
  line-height: 24px;
}
.run::after {
  content: "";
  position: absolute;
  bottom: 1px;
  left: 50%;
  width: 9px;
  height: 5px;
  border-radius: 3px;
  background: #9a9ba0;
  transform: translateX(-50%);
}
.focus { background: #303138; border: 1px solid #3c3d43; }
.focus::after { width: 24px; background: #4cc2ff; bottom: 0; }

.search {
  display: flex;
  align-items: center;
  width: 330px;
  height: 48px;
  margin: 0 3px 0 5px;
  padding: 0 3px 0 15px;
  gap: 15px;
  border: 2px solid #ffffff26;
  border-radius: 24px;
  background: #ffffff22;
}
.search svg { width: 24px; height: 24px; fill: none; stroke: #fff; stroke-width: 2.4; }
.search .plate { width: 74px; height: 34px; stroke: none; }
.search input {
  flex: 1;
  min-width: 0;
  padding: 0;
  border: 0;
  outline: 0;
  background: none;
  font: 19px/28px var(--ui);
  color: #fff;
}
.search input::placeholder { color: #d3d4d8; opacity: 1; }

.tray {
  display: flex;
  align-items: center;
  margin-left: auto;
  padding-right: 29px;
}
.tray svg {
  width: 24px;
  height: 24px;
  fill: none;
  stroke: #fff;
  stroke-width: 1.8;
}
.tray button { margin-right: 24px; }
.lang { align-items: center; width: 44px; }
.tray .net { display: flex; gap: 12px; margin-right: 23px; }
.tray .clock { align-items: flex-end; width: 84px; margin-right: 12px; }
.tray .copilot { position: relative; margin: 0; }
.copilot svg { width: 36px; height: 36px; stroke: none; }
.copilot span {
  position: absolute;
  right: 0;
  bottom: 0;
  width: 27px;
  border-radius: 3px;
  background: #ffc20e;
  color: #1a1a1a;
  font-size: 10px;
  font-weight: 700;
  line-height: 11px;
}
```
